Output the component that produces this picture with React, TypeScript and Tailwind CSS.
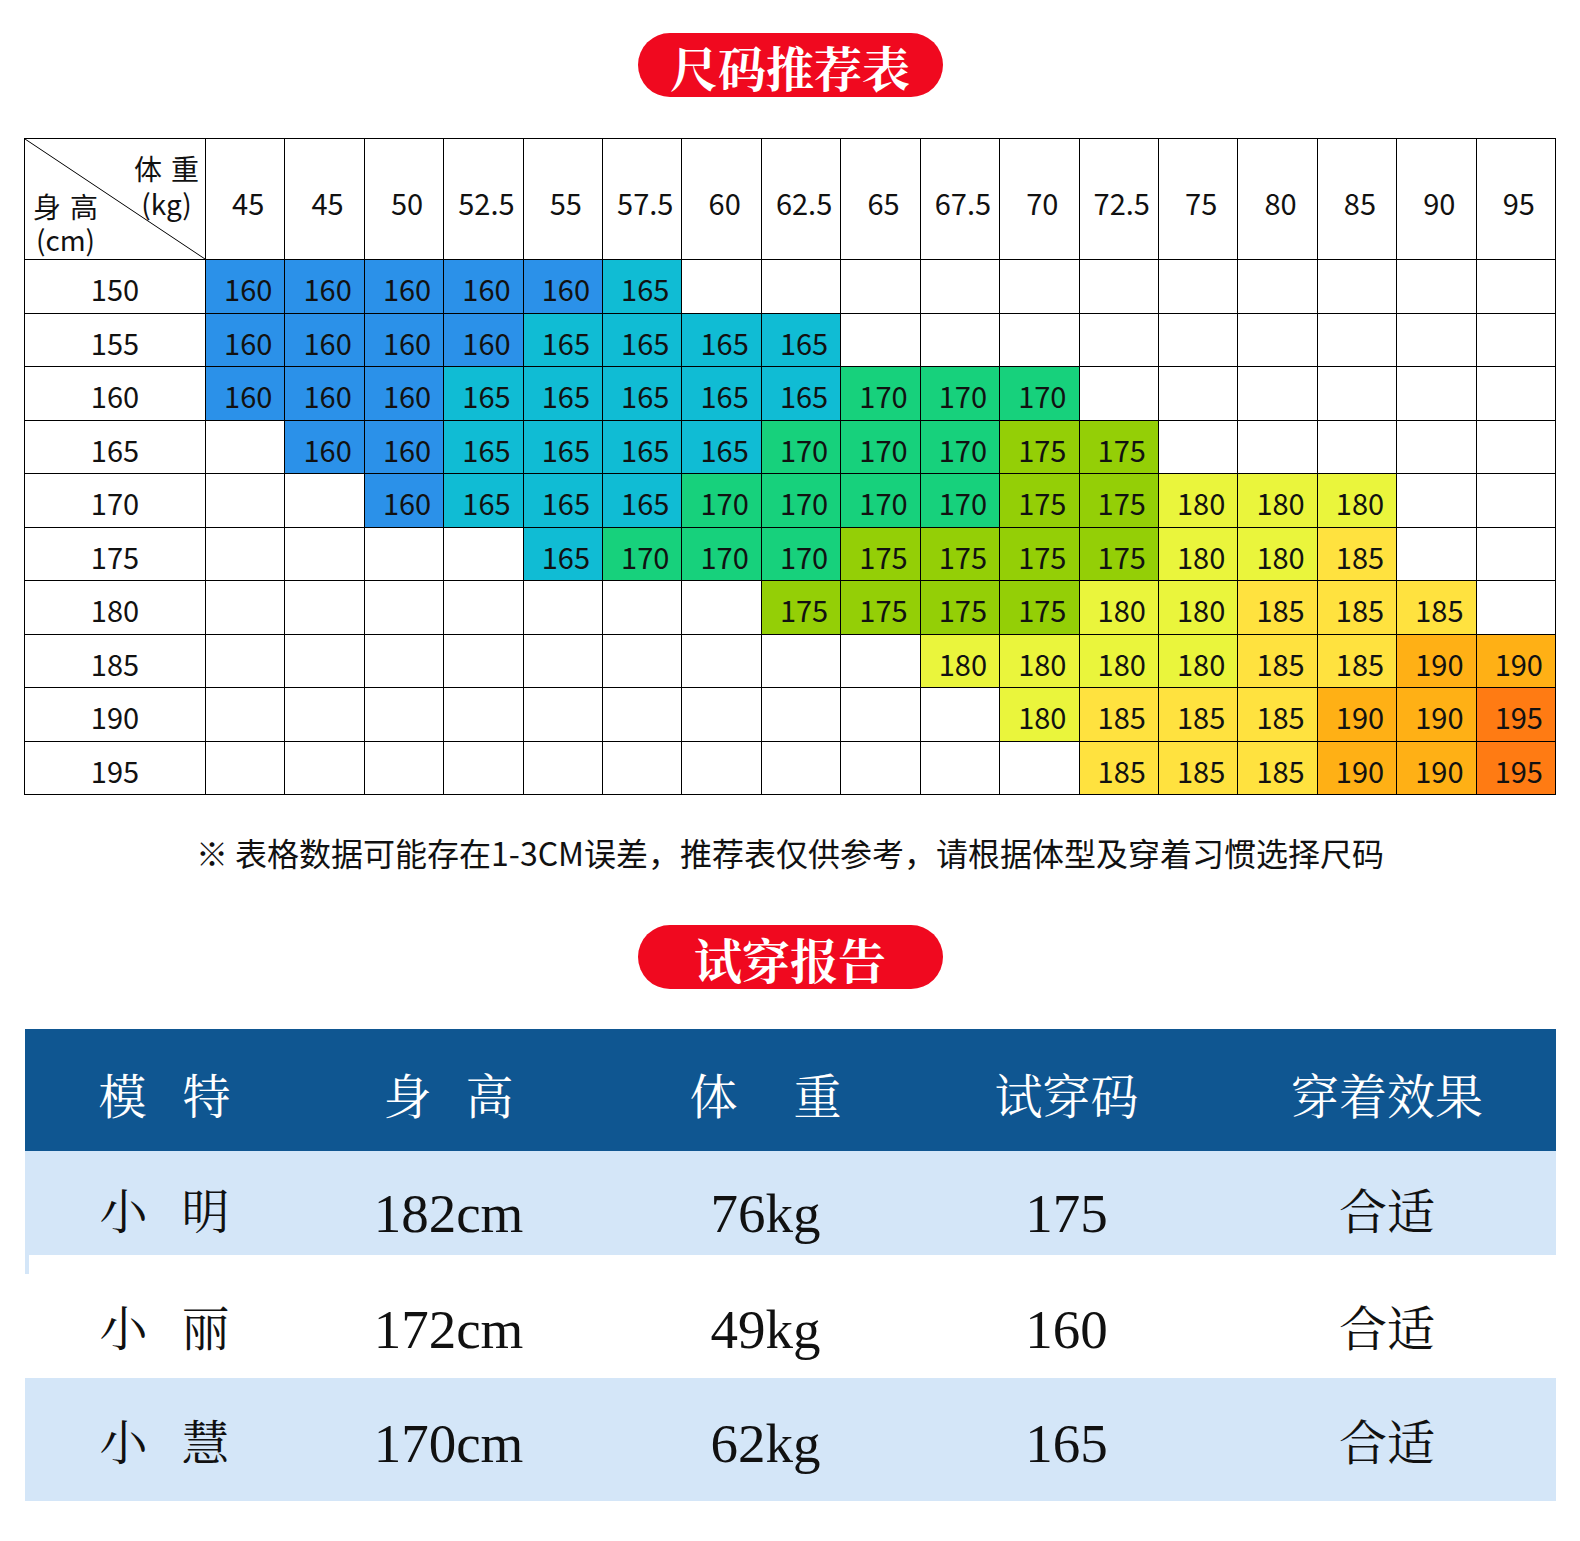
const weights = ["45", "45", "50", "52.5", "55", "57.5", "60", "62.5", "65", "67.5", "70", "72.5", "75", "80", "85", "90", "95"];

const _ = null;
const sizeRows: [string, (number | null)[]][] = [
  ["150", [160, 160, 160, 160, 160, 165, _, _, _, _, _, _, _, _, _, _, _]],
  ["155", [160, 160, 160, 160, 165, 165, 165, 165, _, _, _, _, _, _, _, _, _]],
  ["160", [160, 160, 160, 165, 165, 165, 165, 165, 170, 170, 170, _, _, _, _, _, _]],
  ["165", [_, 160, 160, 165, 165, 165, 165, 170, 170, 170, 175, 175, _, _, _, _, _]],
  ["170", [_, _, 160, 165, 165, 165, 170, 170, 170, 170, 175, 175, 180, 180, 180, _, _]],
  ["175", [_, _, _, _, 165, 170, 170, 170, 175, 175, 175, 175, 180, 180, 185, _, _]],
  ["180", [_, _, _, _, _, _, _, 175, 175, 175, 175, 180, 180, 185, 185, 185, _]],
  ["185", [_, _, _, _, _, _, _, _, _, 180, 180, 180, 180, 185, 185, 190, 190]],
  ["190", [_, _, _, _, _, _, _, _, _, _, 180, 185, 185, 185, 190, 190, 195]],
  ["195", [_, _, _, _, _, _, _, _, _, _, _, 185, 185, 185, 190, 190, 195]],
];

const colors: Record<number, string> = {
  160: "bg-[#2b91e9]",
  165: "bg-[#10bcd4]",
  170: "bg-[#17d17c]",
  175: "bg-[#94cf06]",
  180: "bg-[#eaf53c]",
  185: "bg-[#ffe23f]",
  190: "bg-[#ffb015]",
  195: "bg-[#ff7b13]",
};

const reports = [
  { name: ["小", "明"], height: "182cm", weight: "76kg", size: "175", fit: "合适", bg: "bg-[#d4e6f8]", h: "h-[104px]", pt: "pt-[20px]" },
  { name: ["小", "丽"], height: "172cm", weight: "49kg", size: "160", fit: "合适", bg: "bg-white", h: "h-[123px]", pt: "pt-[26px]" },
  { name: ["小", "慧"], height: "170cm", weight: "62kg", size: "165", fit: "合适", bg: "bg-[#d4e6f8]", h: "h-[123px]", pt: "pt-[8px]" },
];

function Pill({ text }: { text: string }) {
  return (
    <div className="mx-auto flex h-[64px] w-[305px] items-center justify-center rounded-full bg-[#f0091f] pt-[4px]">
      <span className="font-['Noto_Serif_CJK_SC','Noto_Sans_CJK_SC',serif] text-[48px] leading-none font-bold text-white">
        {text}
      </span>
    </div>
  );
}

export default function App() {
  return (
    <main className="min-h-[1541px] bg-white pt-[33px] pb-[40px] font-['Noto_Sans_CJK_SC',sans-serif] text-[#111]">
      <Pill text="尺码推荐表" />

      {/* size chart */}
      <div className="mx-auto mt-[41px] grid w-[1532px] grid-cols-[181px_repeat(17,minmax(0,1fr))] grid-rows-[121px_repeat(10,53.5px)] border-t border-l border-black text-[29px] leading-none">
        <div className="relative flex justify-between border-r border-b border-black pr-[6px] pl-[8px]">
          <svg className="absolute inset-0 h-full w-full" preserveAspectRatio="none" viewBox="0 0 100 100">
            <line x1="0" y1="0" x2="100" y2="100" stroke="#000" strokeWidth="1" vectorEffect="non-scaling-stroke" />
          </svg>
          <div className="relative flex flex-col items-center gap-[5px] self-end pb-[6px] text-[28px] leading-[28px]">
            <div className="flex gap-[9px]">
              <span>身</span>
              <span>高</span>
            </div>
            <span>(cm)</span>
          </div>
          <div className="relative flex flex-col items-center gap-[7px] self-start pt-[15px] text-[28px] leading-[28px]">
            <div className="flex gap-[9px]">
              <span>体</span>
              <span>重</span>
            </div>
            <span>(kg)</span>
          </div>
        </div>
        {weights.map((w, i) => (
          <div key={i} className="flex items-center justify-center border-r border-b border-black pt-[6px] pl-[6px]">
            {w}
          </div>
        ))}

        {sizeRows.map(([h, cells]) => (
          <div key={h} className="contents">
            <div className="flex items-center justify-center border-r border-b border-black pt-[5px]">{h}</div>
            {cells.map((c, j) => (
              <div
                key={j}
                className={`flex items-center justify-center border-r border-b border-black pt-[5px] pl-[6px] ${c ? colors[c] : "bg-white"}`}
              >
                {c ?? ""}
              </div>
            ))}
          </div>
        ))}
      </div>

      <p className="mt-[37px] text-center text-[32px] leading-[40px]">
        ※ 表格数据可能存在1-3CM误差，推荐表仅供参考，请根据体型及穿着习惯选择尺码
      </p>

      <div className="mt-[53px]">
        <Pill text="试穿报告" />
      </div>

      {/* fitting report */}
      <div className="mx-auto mt-[40px] w-[1531px] font-['Liberation_Serif','Noto_Serif_CJK_SC','Noto_Sans_CJK_SC',serif]">
        <div className="grid h-[122px] grid-cols-[280px_288px_346px_256px_361px] bg-[#0f5691] pt-[16px] text-[48px] leading-none text-white">
          <div className="flex items-center justify-center gap-[36px]">
            <span>模</span>
            <span>特</span>
          </div>
          <div className="flex items-center justify-center gap-[34px]">
            <span>身</span>
            <span>高</span>
          </div>
          <div className="flex items-center justify-center gap-[56px]">
            <span>体</span>
            <span>重</span>
          </div>
          <div className="flex items-center justify-center">试穿码</div>
          <div className="flex items-center justify-center pl-[24px]">穿着效果</div>
        </div>

        {reports.map((r, i) => (
          <div
            key={i}
            className={`relative grid grid-cols-[280px_288px_346px_256px_361px] ${r.bg} ${r.h} ${r.pt} leading-none`}
          >
            {i === 1 && <div className="absolute top-0 left-0 h-[19px] w-[4px] bg-[#d4e6f8]" />}
            <div className="flex items-center justify-center gap-[34px] text-[48px]">
              <span>{r.name[0]}</span>
              <span>{r.name[1]}</span>
            </div>
            <div className="flex items-center justify-center text-[55px]">{r.height}</div>
            <div className="flex items-center justify-center text-[55px]">{r.weight}</div>
            <div className="flex items-center justify-center text-[55px]">{r.size}</div>
            <div className="flex items-center justify-center pl-[24px] text-[48px]">{r.fit}</div>
          </div>
        ))}
      </div>
    </main>
  );
}
